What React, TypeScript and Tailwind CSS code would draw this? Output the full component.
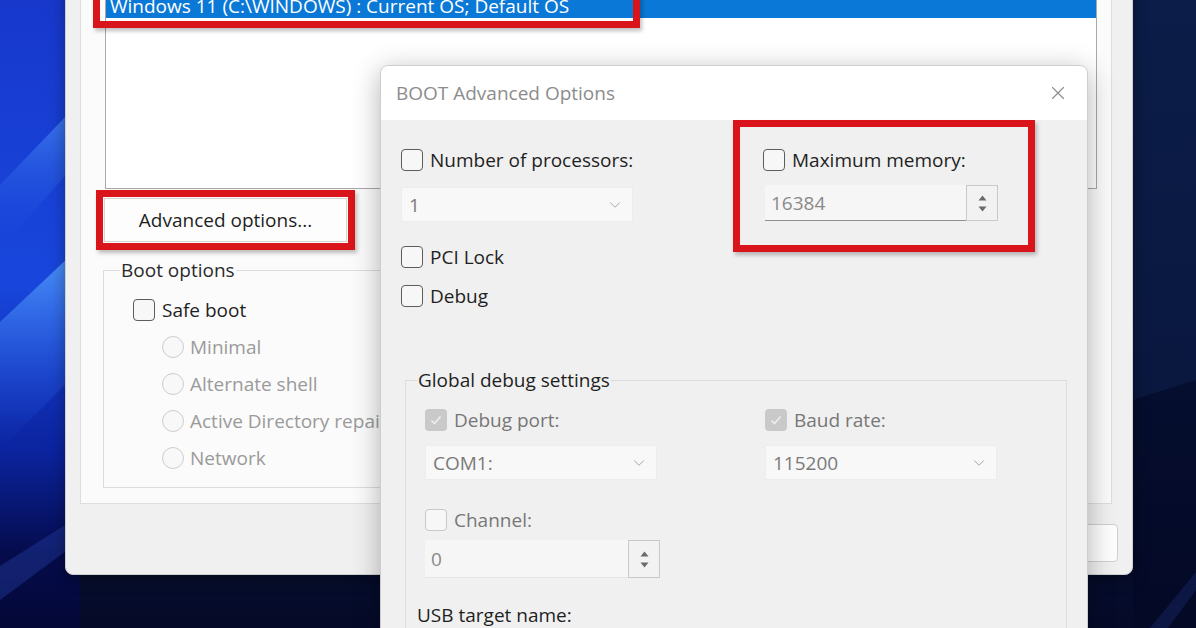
import React from "react";
import { ChevronDown, X } from "lucide-react";

type BoxState = "on" | "off" | "dis" | "disChecked";

function CheckBox({ state = "on" }: { state?: BoxState }) {
  if (state === "disChecked") {
    return (
      <span className="flex h-[22px] w-[22px] shrink-0 items-center justify-center rounded-[4px] bg-[#c9c9c9]">
        <svg width="14" height="14" viewBox="0 0 14 14">
          <path d="M2.5 7.5l3 3 6-7" fill="none" stroke="#eeeeee" strokeWidth="1.6" />
        </svg>
      </span>
    );
  }
  const border = state === "dis" ? "border-[#c8c8c8]" : "border-[#5c5c5c]";
  return <span className={`h-[22px] w-[22px] shrink-0 rounded-[4px] border-[1.5px] bg-[#f7f7f7] ${border}`} />;
}

function CheckRow({ label, state = "on" }: { label: string; state?: BoxState }) {
  const color = state === "dis" || state === "disChecked" ? "text-[#777777]" : "text-[#1f1f1f]";
  return (
    <div className="flex h-[26px] items-center gap-[7px]">
      <CheckBox state={state} />
      <span className={`whitespace-nowrap ${color}`}>{label}</span>
    </div>
  );
}

function RadioRow({ label }: { label: string }) {
  return (
    <div className="flex h-[26px] items-center gap-[6px]">
      <span className="h-[22px] w-[22px] shrink-0 rounded-full border-[1.5px] border-[#cdcdcd] bg-[#f8f8f8]" />
      <span className="whitespace-nowrap text-[#9a9a9a]">{label}</span>
    </div>
  );
}

function Dropdown({ value, width = "w-[232px]" }: { value: string; width?: string }) {
  return (
    <div className={`flex h-[35px] items-center justify-between border border-[#ececec] bg-[#f8f8f8] pl-[7px] pr-[8px] text-[#7a7a7a] ${width}`}>
      <span>{value}</span>
      <ChevronDown size={18} strokeWidth={1.3} color="#a5a5a5" />
    </div>
  );
}

function Spin({ value, underline, height }: { value: string; underline?: boolean; height: string }) {
  return (
    <div className={`flex ${height}`}>
      <div
        className={`flex flex-1 items-center bg-[#f6f6f6] pl-[6px] text-[#8a8a8a] ${
          underline ? "border-b border-[#8f8f8f]" : "border-b border-[#e6e6e6]"
        }`}
      >
        {value}
      </div>
      <div className="flex w-[32px] flex-col items-center justify-center gap-[5px] border border-[#c9c9c9] bg-[#f2f2f2]">
        <svg width="9" height="6" viewBox="0 0 9 6">
          <path d="M0.5 5.5L4.5 0.5L8.5 5.5Z" fill="#6a6a6a" />
        </svg>
        <svg width="9" height="6" viewBox="0 0 9 6">
          <path d="M0.5 0.5L4.5 5.5L8.5 0.5Z" fill="#6a6a6a" />
        </svg>
      </div>
    </div>
  );
}

function Wallpaper() {
  return (
    <svg className="absolute inset-0" width="1196" height="628" viewBox="0 0 1196 628">
      <defs>
        <linearGradient id="left" x1="0" y1="0" x2="0" y2="1">
          <stop offset="0" stopColor="#1838cc" />
          <stop offset="0.45" stopColor="#1846dc" />
          <stop offset="0.72" stopColor="#0b239e" />
          <stop offset="0.88" stopColor="#050c4c" />
          <stop offset="1" stopColor="#040836" />
        </linearGradient>
        <linearGradient id="band" x1="0" y1="0" x2="0" y2="1">
          <stop offset="0" stopColor="#4b90f7" />
          <stop offset="1" stopColor="#1a48dc" stopOpacity="0" />
        </linearGradient>
        <linearGradient id="right" x1="0" y1="0" x2="0" y2="1">
          <stop offset="0" stopColor="#0b1d48" />
          <stop offset="0.6" stopColor="#0a1840" />
          <stop offset="1" stopColor="#050a28" />
        </linearGradient>
      </defs>
      <rect width="1196" height="628" fill="url(#right)" />
      <rect width="80" height="628" fill="url(#left)" />
      <polygon points="0,185 70,112 70,170 0,250" fill="url(#band)" opacity="0.7" />
      <polygon points="0,322 70,256 70,380 0,450" fill="url(#band)" />
      <polygon points="0,566 70,522 70,548 0,600" fill="#2a49b8" opacity="0.35" />
      <polygon points="1133,400 1196,380 1196,628 1133,628" fill="#040924" opacity="0.6" />
      <polygon points="1150,628 1196,572 1196,590 1168,628" fill="#23378a" opacity="0.3" />
    </svg>
  );
}

function MainWindow() {
  return (
    <div className="absolute left-[65px] top-[-30px] flex h-[605px] w-[1068px] flex-col rounded-b-[8px] border border-[#cfcfcf] bg-[#f0f0f0] shadow-[0_4px_16px_rgba(0,0,0,0.35)]">
      <div className="ml-[14px] mr-[20px] flex h-[533px] flex-col items-start border border-[#dedede] bg-[#fbfbfb] pl-[24px] pr-[14px] pt-[19px]">
        <div className="h-[198px] w-full border border-[#a9a9a9] bg-white">
          <div className="h-[26px] whitespace-nowrap bg-[#0a78d6] pl-[4px] pt-[1px] text-white">
            Windows 11 (C:\WINDOWS) : Current OS; Default OS
          </div>
        </div>

        <div className="ml-[-9px] mt-[1px] w-[259px] border-[7px] border-[#d9141b] p-[1px] shadow-[2px_3px_4px_rgba(0,0,0,0.25)]">
          <div className="flex h-[44px] items-center justify-center border border-[#d4d4d4] bg-[#fdfdfd] text-[#1f1f1f]">
            Advanced options...
          </div>
        </div>

        <fieldset className="ml-[-2px] mt-[7px] w-[520px] border border-[#dcdcdc] pb-[16px]">
          <legend className="ml-[16px] px-[1px] text-[#2a2a2a]">Boot options</legend>
          <div className="flex flex-col gap-[11px] pl-[29px] pt-[14px]">
            <CheckRow label="Safe boot" />
            <div className="flex flex-col gap-[11px] pl-[29px]">
              <RadioRow label="Minimal" />
              <RadioRow label="Alternate shell" />
              <RadioRow label="Active Directory repair" />
              <RadioRow label="Network" />
            </div>
          </div>
        </fieldset>
      </div>

      <div className="flex flex-1 justify-end pr-[14px] pt-[20px]">
        <div className="h-[38px] w-[130px] rounded-[4px] border border-[#cfcfcf] bg-[#fdfdfd]" />
      </div>
    </div>
  );
}

function AdvancedDialog() {
  return (
    <div className="absolute left-[380px] top-[65px] h-[600px] w-[708px] overflow-hidden rounded-t-[8px] border border-[#cdcdcd] bg-[#f0f0f0] shadow-[0_6px_28px_rgba(0,0,0,0.3)]">
      <div className="flex h-[54px] items-center justify-between bg-white pl-[15px] pr-[18px] text-[#8c8c8c]">
        <span>BOOT Advanced Options</span>
        <X size={22} strokeWidth={1.2} color="#8a8a8a" />
      </div>

      <div className="px-[20px]">
        <div className="flex items-start">
          <div className="flex w-[232px] flex-col pt-[27px]">
            <CheckRow label="Number of processors:" />
            <div className="mt-[14px]">
              <Dropdown value="1" />
            </div>
            <div className="mt-[22px]">
              <CheckRow label="PCI Lock" />
            </div>
            <div className="mt-[13px]">
              <CheckRow label="Debug" />
            </div>
          </div>

          <div className="ml-[100px] w-[302px] border-[7px] border-[#d9141b] pb-[24px] pl-[23px] pt-[20px] shadow-[2px_3px_4px_rgba(0,0,0,0.25)]">
            <CheckRow label="Maximum memory:" />
            <div className="ml-[2px] mt-[12px] w-[233px]">
              <Spin value="16384" underline height="h-[36px]" />
            </div>
          </div>
        </div>

        <fieldset className="ml-[4px] mt-[58px] border border-[#dcdcdc]">
          <legend className="ml-[11px] px-[1px] text-[#1f1f1f]">Global debug settings</legend>
          <div className="pl-[19px] pt-[14px]">
            <div className="flex gap-[108px]">
              <div className="flex w-[232px] flex-col gap-[12px]">
                <CheckRow label="Debug port:" state="disChecked" />
                <Dropdown value="COM1:" />
              </div>
              <div className="flex w-[232px] flex-col gap-[12px]">
                <CheckRow label="Baud rate:" state="disChecked" />
                <Dropdown value="115200" />
              </div>
            </div>
            <div className="mt-[27px]">
              <CheckRow label="Channel:" state="dis" />
            </div>
            <div className="mt-[7px] w-[235px]">
              <Spin value="0" height="h-[38px]" />
            </div>
            <div className="ml-[-8px] mt-[24px] h-[26px] text-[#1f1f1f]">USB target name:</div>
            <div className="h-[60px]" />
          </div>
        </fieldset>
      </div>
    </div>
  );
}

export default function App() {
  return (
    <div className="relative h-[628px] w-[1196px] overflow-hidden bg-[#0a1a42] font-['Open_Sans',sans-serif] text-[19px] leading-[26px] text-[#1f1f1f]">
      <Wallpaper />
      <MainWindow />
      <div className="absolute left-[93px] top-[-20px] h-[48px] w-[547px] border-[7px] border-[#d9141b] shadow-[2px_3px_4px_rgba(0,0,0,0.25)]" />
      <AdvancedDialog />
    </div>
  );
}
